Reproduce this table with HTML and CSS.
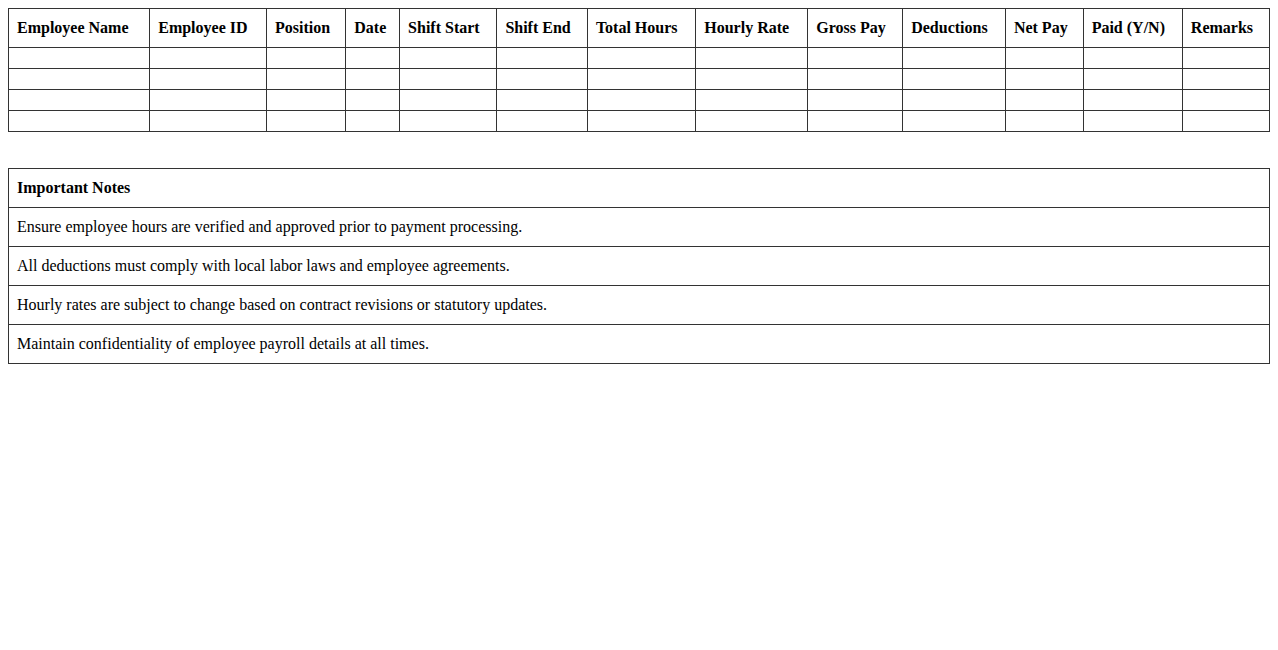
FILE: index.html
```html
<!DOCTYPE html>
<html>
<head>
<meta charset="utf-8">
<link rel="stylesheet" href="styles.css">
</head>
<body>
<table class="grid">
  <thead>
    <tr>
      <th>Employee Name</th><th>Employee ID</th><th>Position</th><th>Date</th><th>Shift Start</th><th>Shift End</th><th>Total Hours</th><th>Hourly Rate</th><th>Gross Pay</th><th>Deductions</th><th>Net Pay</th><th>Paid (Y/N)</th><th>Remarks</th>
    </tr>
  </thead>
  <tbody>
    <tr><td></td><td></td><td></td><td></td><td></td><td></td><td></td><td></td><td></td><td></td><td></td><td></td><td></td></tr>
    <tr><td></td><td></td><td></td><td></td><td></td><td></td><td></td><td></td><td></td><td></td><td></td><td></td><td></td></tr>
    <tr><td></td><td></td><td></td><td></td><td></td><td></td><td></td><td></td><td></td><td></td><td></td><td></td><td></td></tr>
    <tr><td></td><td></td><td></td><td></td><td></td><td></td><td></td><td></td><td></td><td></td><td></td><td></td><td></td></tr>
  </tbody>
</table>
<table class="grid notes">
  <thead>
    <tr><th>Important Notes</th></tr>
  </thead>
  <tbody>
    <tr><td>Ensure employee hours are verified and approved prior to payment processing.</td></tr>
    <tr><td>All deductions must comply with local labor laws and employee agreements.</td></tr>
    <tr><td>Hourly rates are subject to change based on contract revisions or statutory updates.</td></tr>
    <tr><td>Maintain confidentiality of employee payroll details at all times.</td></tr>
  </tbody>
</table>
</body>
</html>
```
FILE: styles.css
```css
body {
  margin: 8px;
  font-family: "Liberation Serif", "Times New Roman", serif;
  font-size: 16px;
  color: #000;
  background: #fff;
}
.grid {
  width: 100%;
  border-collapse: collapse;
}
.grid th,
.grid td {
  border: 1px solid #333;
  padding: 10px 8px;
  text-align: left;
  line-height: 18px;
}
.grid th {
  font-weight: bold;
}
.grid td:empty {
  line-height: 0;
}
.notes {
  margin-top: 36px;
}
```
